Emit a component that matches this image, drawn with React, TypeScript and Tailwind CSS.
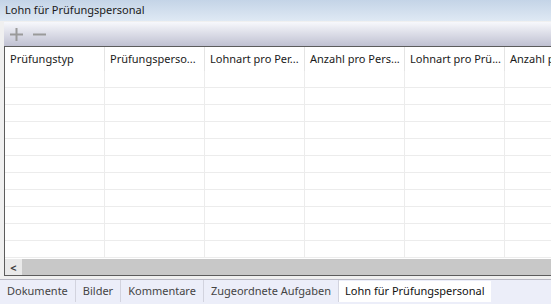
import React from "react";

const COLUMNS = [
  "Prüfungstyp",
  "Prüfungsperso...",
  "Lohnart pro Per...",
  "Anzahl pro Pers...",
  "Lohnart pro Prü...",
  "Anzahl pro Prüf...",
];

const TABS = ["Dokumente", "Bilder", "Kommentare", "Zugeordnete Aufgaben"];

function PlusIcon() {
  return (
    <svg width="15" height="15" viewBox="0 0 15 15">
      <path d="M7.5 1v13M1 7.5h13" stroke="#9a9a9a" strokeWidth="2" />
    </svg>
  );
}

function MinusIcon() {
  return (
    <svg width="15" height="15" viewBox="0 0 15 15">
      <path d="M1 7.5h13" stroke="#9a9a9a" strokeWidth="2" />
    </svg>
  );
}

export default function App() {
  const rows = Array.from({ length: 11 });

  return (
    <div className="flex h-[304px] w-[551px] flex-col overflow-hidden bg-[#f0f0f0] font-['Segoe_UI','Noto_Sans',sans-serif] text-[11px] text-[#1a1a1a]">
      {/* title */}
      <div className="flex h-[21px] shrink-0 items-center bg-gradient-to-b from-[#c4d4e7] to-[#dfe9f4] px-[5px]">
        Lohn für Prüfungspersonal
      </div>

      <div className="flex min-h-0 flex-1 flex-col pl-[4px] pt-[1px]">
        {/* toolbar */}
        <div className="flex h-[25px] shrink-0 items-center gap-[8px] border-b border-[#5c5c5c] bg-gradient-to-b from-[#f7f8fc] to-[#c0c1d2] pl-[5px]">
          <PlusIcon />
          <MinusIcon />
        </div>

        {/* grid */}
        <div className="flex min-h-0 flex-1 flex-col border-b border-l border-[#5c5c5c] bg-white">
          <div className="flex h-[24px] shrink-0 overflow-hidden">
            {COLUMNS.map((c) => (
              <div
                key={c}
                className="flex w-[100px] shrink-0 items-center whitespace-nowrap border-r border-[#e4e4e4] pl-[5px]"
              >
                {c}
              </div>
            ))}
          </div>
          <div className="min-h-0 flex-1 overflow-hidden">
            {rows.map((_, i) => (
              <div key={i} className="flex h-[17px] border-b border-[#ececec]">
                {COLUMNS.map((c) => (
                  <div key={c} className="w-[100px] shrink-0 border-r border-[#ececec]" />
                ))}
              </div>
            ))}
          </div>
          {/* horizontal scrollbar */}
          <div className="flex h-[16px] shrink-0 bg-[#c8c8c8]">
            <div className="flex w-[17px] items-center justify-center bg-[#e9e9e9] text-[11px] font-bold leading-none text-[#404040]">
              &lt;
            </div>
          </div>
        </div>

        {/* tabs */}
        <div className="-ml-[4px] mt-[3px] flex h-[25px] shrink-0 items-stretch border-t border-[#b9b9c4] bg-[#eceef9] pb-[2px]">
          {TABS.map((t) => (
            <div
              key={t}
              className="flex items-center whitespace-nowrap border-r border-[#d2d3de] px-[7px] text-[#444]"
            >
              {t}
            </div>
          ))}
          <div className="mt-[1px] flex items-center whitespace-nowrap bg-white px-[6px] text-[#111]">
            Lohn für Prüfungspersonal
          </div>
        </div>
      </div>
    </div>
  );
}
